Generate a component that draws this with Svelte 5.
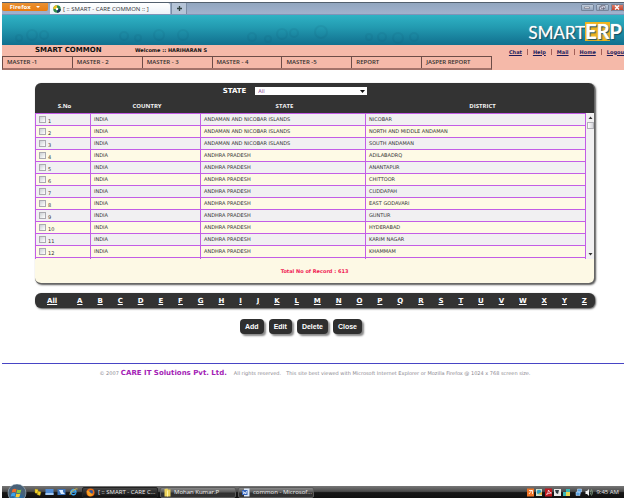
<script>
  const menus = ['MASTER -1', 'MASTER - 2', 'MASTER - 3', 'MASTER - 4', 'MASTER -5', 'REPORT', 'JASPER REPORT'];
  const links = ['Chat', 'Help', 'Mail', 'Home', 'Logou'];
  const AN = 'ANDAMAN AND NICOBAR ISLANDS';
  const AP = 'ANDHRA PRADESH';
  const rows = [
    [AN, 'NICOBAR'],
    [AN, 'NORTH AND MIDDLE ANDAMAN'],
    [AN, 'SOUTH ANDAMAN'],
    [AP, 'ADILABADRQ'],
    [AP, 'ANANTAPUR'],
    [AP, 'CHITTOOR'],
    [AP, 'CUDDAPAH'],
    [AP, 'EAST GODAVARI'],
    [AP, 'GUNTUR'],
    [AP, 'HYDERABAD'],
    [AP, 'KARIM NAGAR'],
    [AP, 'KHAMMAM']
  ];
  const letters = ['All', ...'ABCDEFGHIJKLMNOPQRSTUVWXYZ'];
  const actions = ['Add', 'Edit', 'Delete', 'Close'];
</script>

<div class="screen">
  <div class="tabs">
    <button class="firefox">Firefox <i></i></button>
    <div class="tab">
      <svg width="8" height="8" viewBox="0 0 16 16" aria-hidden="true">
        <circle cx="8" cy="8" r="7.5" fill="#2f8a4c" />
        <path d="M8 .5A7.5 7.5 0 0 0 .5 8H8z" fill="#f0c222" />
        <path d="M8 15.500A7.500 7.500 0 0 0 15.500 8H8z" fill="#17375e" />
        <circle cx="8" cy="8" r="2.500" fill="#fff" />
      </svg>
      <span>[ :: SMART - CARE COMMON :: ]</span>
    </div>
    <button class="plus" aria-label="New tab">
      <svg width="7" height="7" viewBox="0 0 7 7"><path d="M3.500 1v5M1 3.500h5" stroke="#344" stroke-width="1.300" /></svg>
    </button>
    <div class="win">
      <button aria-label="Minimize"><svg width="12" height="7" viewBox="0 0 12 7"><path d="M3.500 3h5v1.500h-5z" fill="#fff" stroke="#667" stroke-width=".6" /></svg></button>
      <button aria-label="Restore"><svg width="12" height="7" viewBox="0 0 12 7"><path d="M5 1.500h4v3H5zM3.500 2.800h4v3h-4z" fill="#eef" stroke="#556" stroke-width=".6" /></svg></button>
      <button class="x" aria-label="Close window"><svg width="12" height="7" viewBox="0 0 12 7"><path d="M4 1.500l4 4M8 1.500l-4 4" stroke="#fff" stroke-width="1.400" /></svg></button>
    </div>
  </div>

  <header class="banner">
    <svg class="rings" width="456" height="30" viewBox="0 0 456 30" fill="none" stroke="#0b4a66" stroke-width="2" aria-hidden="true">
      <circle cx="5" cy="23" r="3" /><circle cx="18" cy="20" r="5" /><circle cx="30" cy="20" r="4" />
      <circle cx="110" cy="21" r="4" /><circle cx="124" cy="23" r="3" /><circle cx="145" cy="20" r="5" /><circle cx="169" cy="20" r="5" />
      <circle cx="238" cy="22" r="4" /><circle cx="254" cy="24" r="3" /><circle cx="268" cy="19" r="5" /><circle cx="280" cy="18" r="4" /><circle cx="307" cy="17" r="6" />
      <circle cx="355" cy="22" r="3" /><circle cx="368" cy="22" r="4" /><circle cx="384" cy="23" r="5" /><circle cx="400" cy="22" r="4" />
    </svg>
    <div class="logo"><span>SMART</span><b><mark>ER</mark>P</b></div>
  </header>

  <div class="pink">
    <div class="welcome">
      <b class="module">SMART COMMON</b>
      <b class="user">Welcome :: HARIHARAN S</b>
      <div class="links">
        {#each links as l, i}
          {#if i}<em></em>{/if}<a href="#{l}">{l}</a>
        {/each}
      </div>
    </div>
    <nav>
      {#each menus as m}<a href="#menu">{m}</a>{/each}
    </nav>
  </div>

  <main>
    <section class="panel">
      <div class="filter">
        <label for="state">STATE</label>
        <div class="pick">
          <select id="state"><option>All</option></select>
          <svg width="5" height="3" viewBox="0 0 5 3" aria-hidden="true"><path d="M0 0h5L2.500 3z" fill="#111" /></svg>
        </div>
      </div>
      <div class="grid">
        <table>
          <colgroup><col class="c1" /><col class="c2" /><col class="c3" /><col /></colgroup>
          <thead><tr><th>S.No</th><th>COUNTRY</th><th>STATE</th><th>DISTRICT</th></tr></thead>
          <tbody>
            {#each rows as r, i}
              <tr>
                <td><label class="check"><input type="checkbox" /><span>{i + 1}</span></label></td>
                <td>INDIA</td><td>{r[0]}</td><td>{r[1]}</td>
              </tr>
            {/each}
            <tr class="next"><td></td><td></td><td></td><td></td></tr>
          </tbody>
        </table>
        <div class="scroll">
          <svg width="5" height="3" viewBox="0 0 5 3" aria-hidden="true"><path d="M.5 3h4L2.500 .5z" fill="#333" /></svg>
          <i></i>
          <svg class="down" width="5" height="3" viewBox="0 0 5 3" aria-hidden="true"><path d="M.5 0h4L2.500 2.500z" fill="#333" /></svg>
        </div>
      </div>
      <p class="total">Total No of Record : 613</p>
    </section>

    <div class="letters">
      {#each letters as l}<a href="#{l}">{l}</a>{/each}
    </div>

    <div class="actions">
      {#each actions as a}<button>{a}</button>{/each}
    </div>
  </main>

  <footer>
    <span>© 2007</span><b>CARE IT Solutions Pvt. Ltd.</b>
    <span class="rights">All rights reserved.</span>
    <span>This site best viewed with Microsoft Internet Explorer or Mozilla Firefox @ 1024 x 768 screen size.</span>
  </footer>

  <div class="taskbar">
    <button class="start" aria-label="Start">
      <svg width="20" height="14" viewBox="0 0 20 14">
        <defs><radialGradient id="orb" cy=".9"><stop offset="0" stop-color="#6fd3ee" /><stop offset=".5" stop-color="#2369a5" /><stop offset="1" stop-color="#496177" /></radialGradient></defs>
        <circle cx="10" cy="9" r="9" fill="url(#orb)" stroke="#a9bcc8" stroke-width=".6" />
        <path d="M5.500 5.500q2-1.500 4-.3l-.8 3.200q-2-1-4 .2z" fill="#f06a28" />
        <path d="M10.200 5.500q2 1.100 4.200 0l-.9 3.200q-2 1-4 0z" fill="#8cc63e" />
        <path d="M4.500 9.400q2-1.200 4-.2l-.8 3.200q-2-1-4 .2z" fill="#3aa2ea" />
        <path d="M9.300 9.500q2 1.100 4.100 0l-.9 3.200q-2 1-4 0z" fill="#fbcb2d" />
      </svg>
    </button>
    <div class="quick">
      <svg width="8" height="8" viewBox="0 0 8 8"><path d="M1 1l3 .5v4L1 5zM4 3l3 1-1 3.500-3-1z" fill="#f3d32b" stroke="#a28310" stroke-width=".4" /></svg>
      <svg width="9" height="8" viewBox="0 0 9 8"><path d="M.5 1h8v6h-8z" fill="#4f8bd4" /><path d="M.5 5h8v2h-8z" fill="#a4c8ef" /></svg>
      <svg width="9" height="8" viewBox="0 0 9 8"><path d="M.5 1h8v6h-8z" fill="#3c73b9" /><path d="M2 2h4v2l2 2H4z" fill="#d9ecff" /></svg>
      <svg width="9" height="8" viewBox="0 0 9 8"><path d="M6.800 5.200A2.600 2.600 0 1 1 7 4H2.500" fill="none" stroke="#3ca5ef" stroke-width="1.400" /><path d="M1 7Q0 5 4 2.500T8.500 1" fill="none" stroke="#f1c63b" stroke-width=".8" /></svg>
    </div>
    <button class="task on">
      <svg width="9" height="9" viewBox="0 0 9 9"><circle cx="4.500" cy="4.500" r="4" fill="#e96c15" /><circle cx="5" cy="4" r="2" fill="#31569c" /><path d="M.6 3q2-1 3 .8T7 6q-1 2.300-3 2.300T.6 3z" fill="#f6a122" /></svg>
      <span>[ :: SMART - CARE C...</span>
    </button>
    <button class="task">
      <svg width="7" height="9" viewBox="0 0 7 9"><path d="M.5 1l3-.5.5 1h2.500v7h-6z" fill="#eed45c" /><path d="M3 2.500h1v6H3z" fill="#fff4a8" /></svg>
      <span>Mohan Kumar.P</span>
    </button>
    <button class="task">
      <svg width="8" height="9" viewBox="0 0 8 9"><path d="M2 .5h5.500v8H2z" fill="#dce9fb" /><path d="M0 2h5.500v5H0z" fill="#3767bd" /><path d="M1 3l.8 3 1-2 1 2 .8-3" fill="none" stroke="#fff" stroke-width=".7" /></svg>
      <span>common - Microsof...</span>
    </button>
    <div class="tray">
      <svg width="55" height="9" viewBox="0 0 55 9" aria-hidden="true">
        <path d="M0 .5h7v8H0z" fill="#ef7426" /><path d="M2 6l3-4M2 2.500h3.500V6" stroke="#fff" fill="none" stroke-width=".8" />
        <path d="M9 1h6v7H9z" fill="#cfe2cd" /><circle cx="12" cy="4" r="2.300" fill="#2f9fc1" /><path d="M11 6l4-2v3z" fill="#e6b230" />
        <path d="M18 .5h7v8h-7z" fill="#bd181e" /><path d="M19.500 6.500q2-2 2-4.500 1 3 3 3-3 0-5 1.500" fill="none" stroke="#fff" stroke-width=".7" />
        <path d="M27 1h7v7h-7z" fill="#e9e9e9" /><path d="M28 2h4l-1 4-2-1z" fill="#303b42" />
        <path d="M36 4h3v4h-3zM39 1h4v3h-4z" fill="#37b6b7" /><path d="M39 4h4v4h-4z" fill="#e6d452" />
        <path d="M50 3h4v3h-4z" fill="#254f8c" /><path d="M49 4h4v3.500h-4zM50.500 1h4v3h-4z" fill="#58a0de" stroke="#d3e5fa" stroke-width=".5" />
      </svg>
      <svg width="8" height="9" viewBox="0 0 8 9" aria-hidden="true"><path d="M.5 3h1.500l2-2v7L2 6H.5z" fill="#f0f0f0" /><path d="M5.300 2.500q1.300 2 0 4M6.500 1.500q2 3 0 6" fill="none" stroke="#9fc6a0" stroke-width=".7" /></svg>
      <span>9:45 AM</span>
    </div>
  </div>
</div>

<style>
  :global(body) { background: #fff; }
  .screen {
    box-sizing: border-box;
    min-height: 100vh;
    padding: 2px 0 0 2px;
    display: flex;
    flex-direction: column;
    overflow: hidden;
    font-family: "DejaVu Sans", Verdana, sans-serif;
    font-size: 5px;
    line-height: 8px;
    color: #333;
  }
  button { font: inherit; padding: 0; margin: 0; border: 0; white-space: nowrap; }
  svg { display: block; flex: none; }
  a { color: inherit; }

  .tabs {
    display: flex;
    height: 13px;
    box-sizing: border-box;
    border-top: 1px solid #53606e;
    border-bottom: 1px solid #7f94b8;
    background: linear-gradient(#91a6bf, #a2b2cd);
    font-family: "Open Sans", sans-serif;
    font-size: 6px;
  }
  .firefox {
    width: 46px;
    height: 8px;
    line-height: 7px;
    font-size: 6px;
    font-weight: bold;
    color: #fff;
    background: linear-gradient(#e89034, #ea7c0e);
    border-radius: 0 0 2px 2px;
  }
  .firefox i {
    display: inline-block;
    margin: 0 0 1px 4px;
    border: 2px solid transparent;
    border-top-color: #fff;
    border-bottom: 0;
  }
  .tab {
    display: flex;
    align-items: center;
    gap: 2px;
    width: 120px;
    box-sizing: border-box;
    margin-left: 2px;
    padding-left: 3px;
    background: linear-gradient(#fff, #edf2f8);
    border-radius: 2px 2px 0 0;
    white-space: nowrap;
  }
  .plus {
    display: flex;
    align-items: center;
    justify-content: center;
    width: 16px;
    margin-left: 1px;
    background: #b5c4d7;
    border: solid #7b8da5;
    border-width: 0 1px;
  }
  .win { display: flex; gap: 2px; margin: 1px 0 0 auto; }
  .win button { width: 13px; height: 7px; background: linear-gradient(#c6d2e0, #8d9fb8); border-radius: 1px; outline: 1px solid #75859b; outline-offset: -1px; }
  .win .x { background: linear-gradient(#df8a76, #c33820); }

  .banner {
    display: flex;
    justify-content: space-between;
    height: 30px;
    background: linear-gradient(#2fb2c4, #239bb1 40%, #116f8e);
    overflow: hidden;
  }
  .rings { margin-left: 12px; opacity: .09; }
  .logo {
    display: flex;
    align-items: baseline;
    padding: 6px 2px 0 0;
    font: 17px/24px Lato, sans-serif;
    color: #fff;
    text-shadow: 1px 1px 1px #124c60, 0 0 1px #fff;
  }
  .logo b { font-size: 20px; line-height: 20px; }
  .logo mark { display: inline-block; color: inherit; background: #eeb31e; line-height: 19px; }

  .pink { background: #f5b9a9; height: 25px; }
  .welcome { display: flex; height: 11px; align-items: center; color: #111; white-space: nowrap; }
  .module { font-size: 7px; width: 100px; padding-left: 33px; line-height: 11px; }
  .user { line-height: 11px; }
  .links { margin: 2px 0 0 auto; display: flex; gap: 5px; font-weight: bold; align-items: center; }
  .links a { color: #1c1c5c; }
  .links em { width: 1px; height: 6px; background: #a25f58; }
  nav { display: flex; box-sizing: border-box; width: 490px; height: 14px; border: 1px solid #6d4c47; border-bottom: 2px solid #a3736a; }
  nav a {
    flex: 1;
    padding-left: 4px;
    font: 600 6px/11px "Open Sans", sans-serif;
    color: #33302f;
    text-decoration: none;
    white-space: nowrap;
  }
  nav a + a { border-left: 1px solid #6d4c47; }

  main { padding: 13px 29px 0 33px; }
  .panel {
    background: #333;
    border-radius: 6px;
    border: solid #666;
    border-width: 0 1px 1px 0;
    box-shadow: 1px 1px 2px #555;
    overflow: hidden;
  }
  .filter { display: flex; align-items: center; justify-content: center; gap: 9px; height: 16px; padding-right: 39px; }
  .filter label { font-size: 7px; font-weight: bold; color: #fff; }
  .pick { display: grid; align-items: center; width: 112px; }
  .pick > * { grid-area: 1 / 1; }
  .pick svg { justify-self: end; margin-right: 2px; pointer-events: none; }
  select {
    appearance: none;
    width: 100%;
    height: 8px;
    margin: 0;
    padding: 0 3px;
    border: 0;
    border-radius: 0;
    background: #fff;
    color: #7d3b8e;
    font: 5px/8px "DejaVu Sans", sans-serif;
  }
  .grid { display: flex; }
  table { flex: 1; table-layout: fixed; border-spacing: 0; width: 100%; }
  .c1 { width: 55px; }
  .c2 { width: 110px; }
  .c3 { width: 165px; }
  th { height: 14px; padding: 0 0 0 4px; font: bold 6px/14px "Open Sans", sans-serif; color: #f4f4f4; }
  th:last-child { padding-left: 14px; }
  td {
    height: 11px;
    padding: 0 0 0 3px;
    border-style: solid;
    border-color: #c35de6;
    border-width: 1px 0 0 1px;
    background: #f1f0f2;
    line-height: 11px;
    white-space: nowrap;
  }
  td:last-child { border-right-width: 1px; }
  tr:nth-child(even) td { background: #fefae6; }
  tr.next td { height: 1px; line-height: 1px; background: #fdf9e5; }
  .check { display: flex; align-items: center; gap: 2px; height: 11px; }
  .check span { padding-top: 3px; }
  .check input { appearance: none; box-sizing: border-box; width: 7px; height: 7px; margin: 0; border: 1px solid #aaa9b0; background: linear-gradient(135deg, #ccd0d5, #fff); }
  .scroll { display: flex; flex-direction: column; align-items: center; width: 8px; margin-top: 14px; padding: 3px 0; box-sizing: border-box; background: #f2f1f2; }
  .scroll i { width: 7px; height: 7px; margin-top: 3px; box-sizing: border-box; border: 1px solid #b1b1b6; background: linear-gradient(90deg, #fff, #d4d4da); }
  .down { margin-top: auto; }
  .total { margin: 0; background: #fdf9e5; color: #f01c54; font-weight: bold; text-align: center; line-height: 24px; }

  .letters {
    display: flex;
    justify-content: space-between;
    align-items: center;
    height: 15px;
    margin-top: 9px;
    padding: 0 8px 0 12px;
    border-radius: 6px;
    background: #333;
    box-shadow: 1px 1px 2px #555;
    color: #fff;
    font-size: 7px;
    font-weight: bold;
  }
  .letters a:first-child { margin-right: 5px; }
  .actions { display: flex; justify-content: center; gap: 5px; margin-top: 11px; padding-right: 28px; }
  .actions button {
    height: 15px;
    padding: 0 5px;
    border-radius: 4px;
    background: #2f2f2f;
    box-shadow: 2px 2px 2px #888;
    color: #fff;
    font: bold 7px/15px "Liberation Sans", Arial, sans-serif;
  }

  footer {
    display: flex;
    justify-content: center;
    align-items: baseline;
    margin: 29px 0 auto;
    padding: 5px 0 0 4px;
    border-top: 1px solid #4845c5;
    color: #8b8890;
    white-space: nowrap;
  }
  footer b { margin: 0 7px 0 2px; font-size: 7px; color: #a31cb5; }
  .rights { margin-right: 5px; }

  .taskbar {
    display: flex;
    align-items: center;
    height: 12px;
    background: linear-gradient(#777, #4a4a4a 45%, #171717 55%, #111);
    color: #e5e5e5;
    font: 6px/10px "Open Sans", sans-serif;
  }
  .start { width: 20px; margin: -2px 0 0 5px; background: none; }
  .quick { display: flex; gap: 3px; margin: 0 4px 0 7px; }
  .task {
    display: flex;
    align-items: center;
    gap: 3px;
    width: 76px;
    height: 11px;
    margin-right: 2px;
    padding: 0 3px;
    box-sizing: border-box;
    border: 1px solid #5b5b5b;
    border-radius: 2px;
    background: linear-gradient(#888, #5a5a5a 45%, #303030 55%, #333);
    color: #eee;
  }
  .on { background: linear-gradient(#444, #111); border-color: #222; }
  .tray { display: flex; align-items: center; gap: 3px; margin: 0 5px 0 auto; white-space: nowrap; }
</style>
